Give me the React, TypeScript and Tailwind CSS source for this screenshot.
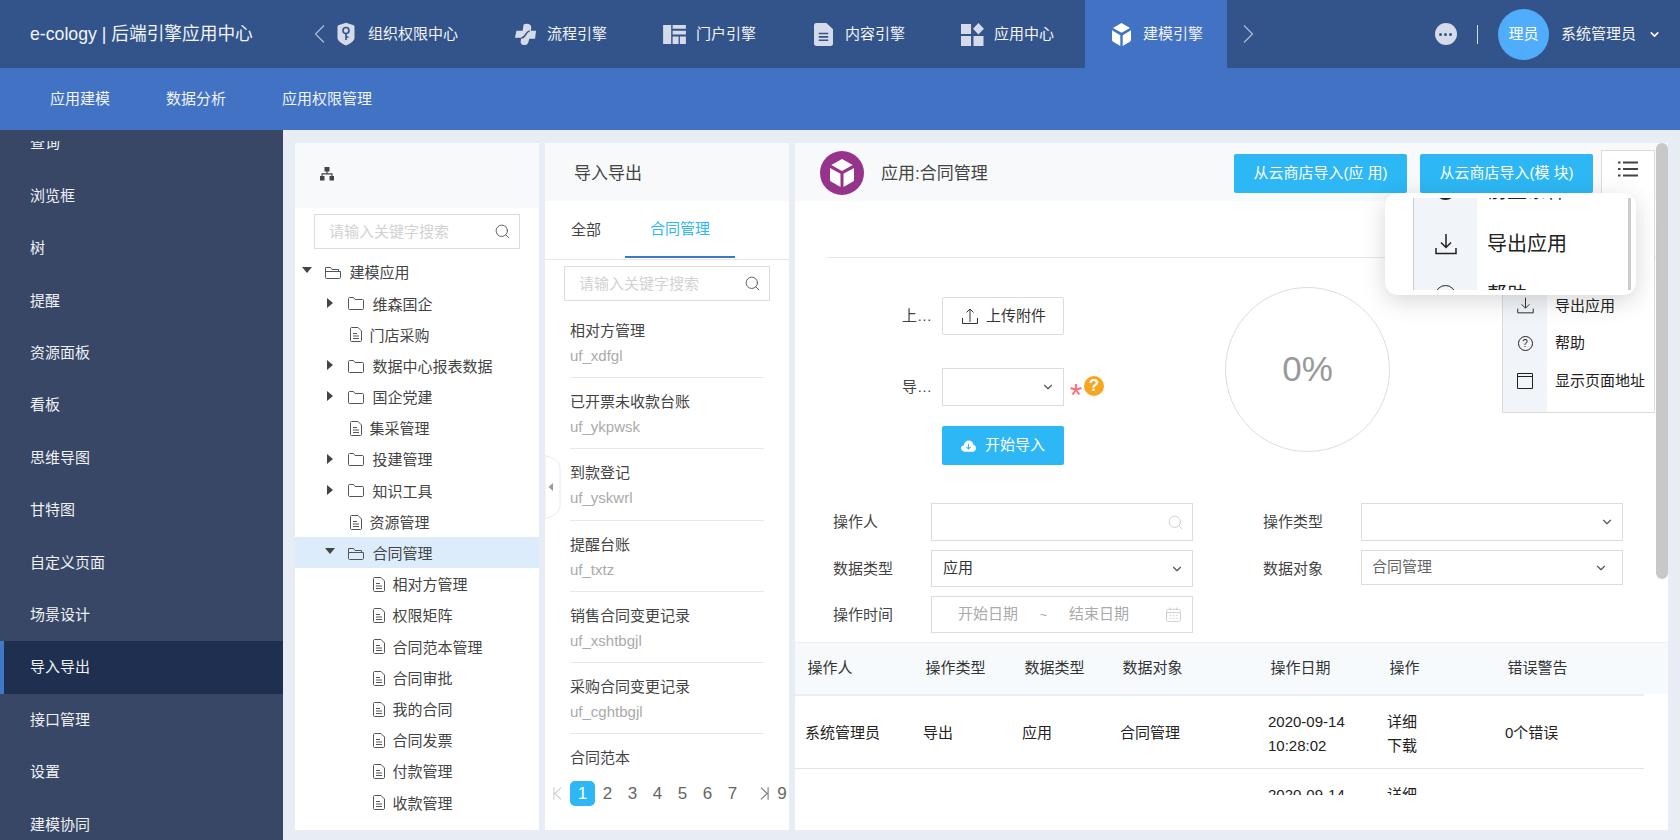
import React from 'react';
import { ChevronDown, Search } from 'lucide-react';

const SIDE_ITEMS = ['查询', '浏览框', '树', '提醒', '资源面板', '看板', '思维导图', '甘特图', '自定义页面', '场景设计', '导入导出', '接口管理', '设置', '建模协同'];

const LIST_ITEMS = [
  ['相对方管理', 'uf_xdfgl'],
  ['已开票未收款台账', 'uf_ykpwsk'],
  ['到款登记', 'uf_yskwrl'],
  ['提醒台账', 'uf_txtz'],
  ['销售合同变更记录', 'uf_xshtbgjl'],
  ['采购合同变更记录', 'uf_cghtbgjl'],
  ['合同范本', ''],
];

const TREE_ROWS = [
  { label: '建模应用', type: 'open', depth: 0 },
  { label: '维森国企', type: 'closed', depth: 1 },
  { label: '门店采购', type: 'doc', depth: 1 },
  { label: '数据中心报表数据', type: 'closed', depth: 1 },
  { label: '国企党建', type: 'closed', depth: 1 },
  { label: '集采管理', type: 'doc', depth: 1 },
  { label: '投建管理', type: 'closed', depth: 1 },
  { label: '知识工具', type: 'closed', depth: 1 },
  { label: '资源管理', type: 'doc', depth: 1 },
  { label: '合同管理', type: 'open', depth: 1, active: true },
  { label: '相对方管理', type: 'doc', depth: 2 },
  { label: '权限矩阵', type: 'doc', depth: 2 },
  { label: '合同范本管理', type: 'doc', depth: 2 },
  { label: '合同审批', type: 'doc', depth: 2 },
  { label: '我的合同', type: 'doc', depth: 2 },
  { label: '合同发票', type: 'doc', depth: 2 },
  { label: '付款管理', type: 'doc', depth: 2 },
  { label: '收款管理', type: 'doc', depth: 2 },
];

const TABLE_COLS = 'grid grid-cols-[118px_99px_98px_148px_119px_118px_1fr]';

const CubeIcon = ({ className }: { className: string }) => (
  <svg viewBox="2.5 1.5 19 21" preserveAspectRatio="none" className={className} fill="currentColor">
    <path d="M12 1.5 20.5 6 12 10.5 3.5 6Z" />
    <path d="M2.5 8.2 10.8 12.6V22.5L3.6 18.6C2.9 18.2 2.5 17.6 2.5 16.8Z" />
    <path d="M21.5 8.2 13.2 12.6V22.5L20.4 18.6C21.1 18.2 21.5 17.6 21.5 16.8Z" />
  </svg>
);

const ShieldIcon = () => (
  <svg viewBox="0 0 18 24" className="w-[18px] h-[24px]">
    <path d="M2 3 9 .8 16 3C17 3.3 17.5 3.8 17.5 5V16C17.5 19 12 22.5 9 23.5 6 22.5.5 19 .5 16V5C.5 3.8 1 3.3 2 3Z" fill="#d5dbe8" />
    <circle cx="9" cy="8.5" r="3" fill="none" stroke="#33548a" strokeWidth="1.6" />
    <path d="M9 11.5V18M9 15H11.5" fill="none" stroke="#33548a" strokeWidth="1.6" />
  </svg>
);

const FlowIcon = () => (
  <svg viewBox="0 0 24 24" className="w-[23px] h-[23px]">
    <path d="M10 1.5Q12 .5 15 1 18 1.5 18 5L17.5 8H23L22 16.5H16L15 20Q14 23 10.5 23 6.5 23 7 19L7.5 15.5H1L2.5 8H9Z" fill="#d5dbe8" />
    <path d="M16.5 8.5C12 8 12.5 16 7.5 15.5" fill="none" stroke="#33548a" strokeWidth="1.5" />
  </svg>
);

const PortalIcon = () => (
  <svg viewBox="0 0 24 20" className="w-[23px] h-[19px]" fill="#d5dbe8">
    <path d="M0 0H8.5V20H0ZM10 0H24V4H10ZM10 6H24V10H10ZM10 12H16.3V20H10ZM17.7 12H24V20H17.7Z" />
  </svg>
);

const DocFillIcon = () => (
  <svg viewBox="0 0 20 24" className="w-[19px] h-[23px]">
    <path d="M2.5 0H13L20 6.5V21.5C20 23 19 24 17.5 24H2.5C1 24 0 23 0 21.5V2.5C0 1 1 0 2.5 0Z" fill="#d5dbe8" />
    <path d="M5 11H15M5 14.5H15M5 18H15" stroke="#33548a" strokeWidth="1.6" />
  </svg>
);

const AppsIcon = () => (
  <svg viewBox="0 0 24 24" className="w-[23px] h-[23px]" fill="#d5dbe8">
    <path d="M0 1H10.5V11.5H0ZM0 13.5H10.5V24H0ZM13 13.5H23.5V24H13ZM18.2 0 24 6 18.2 12 12.5 6Z" />
  </svg>
);

const NavArrow = ({ points }: { points: string }) => (
  <svg viewBox="0 0 11 18" className="w-[11px] h-[18px]" fill="none" stroke="#aebcd4" strokeWidth="1.2">
    <path d={points} />
  </svg>
);

const Tab = ({ icon, label, active, first }: { icon: React.ReactNode; label: string; active?: boolean; first?: boolean }) => (
  <div className={`h-full flex items-center pr-[24px] ${first ? '' : 'pl-[24px]'} ${active ? 'bg-[#4172c4]' : ''}`}>
    <div className="w-[24px] flex justify-center">{icon}</div>
    <span className="ml-[10px] text-[15px] text-[#f2f4f8] whitespace-nowrap">{label}</span>
  </div>
);

const SearchBox = () => (
  <div className="ml-[19px] w-[206px] h-[35px] border border-[#dcdcdc] flex items-center pl-[14px] pr-[8px]">
    <input placeholder="请输入关键字搜索" className="flex-1 min-w-0 pt-[2px] text-[15px] outline-none placeholder:text-[#d2d2d2]" />
    <Search className="w-[17px] h-[17px] text-[#555]" strokeWidth={1.3} />
  </div>
);

const TreeRow = ({ label, type, depth, active }: { label: string; type: string; depth: number; active?: boolean }) => {
  const isDoc = type === 'doc';
  const padding = isDoc ? (depth === 1 ? 'pl-[55px]' : 'pl-[78px]') : depth === 0 ? 'pl-[7px]' : 'pl-[30px]';
  return (
    <div className={`h-[31.2px] flex items-center text-[15px] text-[#444] whitespace-nowrap ${padding} ${active ? 'bg-[#dcecfb]' : ''}`}>
      {type === 'open' && (
        <svg viewBox="0 0 10 6" className="w-[10px] h-[6px] mb-[3px]"><path d="M0 0H10L5 6Z" fill="#444" /></svg>
      )}
      {type === 'closed' && (
        <div className="w-[10px] flex justify-center">
          <svg viewBox="0 0 6 10" className="w-[6px] h-[10px]"><path d="M0 0 6 5 0 10Z" fill="#444" /></svg>
        </div>
      )}
      {type === 'open' && (
        <svg viewBox="0 0 16 13" className="ml-[13px] mt-[2px] w-[16px] h-[13px]" fill="none" stroke="#555" strokeWidth="1">
          <path d="M.5 11.5V1.5H5.5L7 3.5H13.5V5.5M.5 11.5V5.5H15.5V11C15.5 12 15 12.5 14 12.5H1.5C1 12.5.5 12 .5 11.5Z" />
        </svg>
      )}
      {type === 'closed' && (
        <svg viewBox="0 0 16 13" className="ml-[13px] mt-[2px] w-[16px] h-[13px]" fill="none" stroke="#555" strokeWidth="1">
          <path d="M.5 1.5C.5 1 1 .5 1.5 .5H5.5L7 2.5H14.5C15 2.5 15.5 3 15.5 3.5V11.5C15.5 12 15 12.5 14.5 12.5H1.5C1 12.5.5 12 .5 11.5Z" />
        </svg>
      )}
      {isDoc && (
        <svg viewBox="0 0 12 15" className="mt-[2px] w-[12px] h-[15px]" fill="none" stroke="#555" strokeWidth="1">
          <path d="M1.5.5H8L11.5 4V13.5C11.5 14 11 14.5 10.5 14.5H1.5C1 14.5.5 14 .5 13.5V1.5C.5 1 1 .5 1.5 .5ZM3 6.5H7M3 9H9M3 11.5H9" />
        </svg>
      )}
      <span className={`pt-[4px] ${isDoc ? 'ml-[7.5px]' : 'ml-[8.5px]'}`}>{label}</span>
    </div>
  );
};

const DownloadIcon = ({ className, stroke }: { className: string; stroke: number }) => (
  <svg viewBox="0 0 22 22" className={className} fill="none" stroke="#222" strokeWidth={stroke}>
    <path d="M11 1V14M6 9.5 11 14.5 16 9.5M1 15V20.5H21V15" />
  </svg>
);

const FilterField = ({ label, children, height = 'h-[37px]' }: { label: string; children?: React.ReactNode; height?: string }) => (
  <div className="flex items-start w-[360px]">
    <span className="w-[98px] h-[37px] leading-[37px] text-[15px] text-[#444]">{label}</span>
    <div className={`w-[262px] border border-[#dcdcdc] flex items-center ${height}`}>{children}</div>
  </div>
);

const Chevron = ({ className }: { className: string }) => <ChevronDown className={`w-[14px] h-[14px] text-[#555] ${className}`} strokeWidth={2} />;

const LogRow = () => (
  <div className={`${TABLE_COLS} pl-[10px] pt-[2px] h-[73px] border-b border-[#e4e4e4] items-center text-[15px] text-[#222]`}>
    <span>系统管理员</span>
    <span>导出</span>
    <span>应用</span>
    <span>合同管理</span>
    <span className="leading-[24px] pt-[2px]">2020-09-14<br />10:28:02</span>
    <span className="leading-[24px] pt-[2px]">详细<br />下载</span>
    <span>0个错误</span>
  </div>
);

const MENU_ROWS: [string, React.ReactNode][] = [
  ['导出应用', <DownloadIcon key="d" className="w-[17px] h-[17px]" stroke={1.2} />],
  ['帮助', <div key="h" className="w-[15px] h-[15px] rounded-full border border-[#222] text-[10px] leading-[13px] text-center">?</div>],
  ['显示页面地址', <svg key="b" viewBox="0 0 16 16" className="w-[16px] h-[16px]" fill="none" stroke="#222"><path d="M.5 .5H15.5V15.5H.5ZM.5 3.5H15.5" /></svg>],
];

export default function App() {
  return (
    <div className="w-[1680px] h-[840px] overflow-hidden flex flex-col bg-[#e8edf5] [font-family:'Liberation_Sans','Noto_Sans_CJK_SC',sans-serif]">
      {/* top bar */}
      <div className="h-[68px] shrink-0 bg-[#33548a] flex items-center">
        <div className="w-[310px] pl-[30px] text-[17.7px] text-[#f2f4f8] whitespace-nowrap">e-cology | 后端引擎应用中心</div>
        <div className="w-[24px] pl-[4px] flex">
          <NavArrow points="M10 .5 1.5 9 10 17.5" />
        </div>
        <div className="h-full flex gap-[7px]">
          <Tab first icon={<ShieldIcon />} label="组织权限中心" />
          <Tab icon={<FlowIcon />} label="流程引擎" />
          <Tab icon={<PortalIcon />} label="门户引擎" />
          <Tab icon={<DocFillIcon />} label="内容引擎" />
          <Tab icon={<AppsIcon />} label="应用中心" />
          <Tab active icon={<CubeIcon className="w-[19px] h-[23px] text-white" />} label="建模引擎" />
        </div>
        <div className="ml-[16px] flex">
          <NavArrow points="M1 .5 9.5 9 1 17.5" />
        </div>
        <div className="ml-auto flex items-center pr-[19px]">
          <div className="w-[22px] h-[22px] rounded-full bg-[#d5dbe8] flex items-center justify-center gap-[2px]">
            <span className="w-[3px] h-[3px] rounded-full bg-[#33548a]" />
            <span className="w-[3px] h-[3px] rounded-full bg-[#33548a]" />
            <span className="w-[3px] h-[3px] rounded-full bg-[#33548a]" />
          </div>
          <div className="ml-[20px] w-px h-[19px] bg-[#d5dbe8]" />
          <div className="ml-[20px] w-[51px] h-[51px] rounded-full bg-[#4fadfb] flex items-center justify-center text-[15px] text-white">理员</div>
          <span className="ml-[12px] text-[15px] text-[#f2f4f8] whitespace-nowrap">系统管理员</span>
          <ChevronDown className="ml-[12px] w-[13px] h-[13px] text-white" strokeWidth={3} />
        </div>
      </div>

      {/* sub nav */}
      <div className="h-[62px] shrink-0 bg-[#4172c4] flex items-center pl-[50px] gap-[56px] text-[15px] text-[#f2f4f8]">
        <span>应用建模</span>
        <span>数据分析</span>
        <span>应用权限管理</span>
      </div>

      <div className="flex-1 min-h-0 flex">
        {/* sidebar */}
        <div className="w-[283px] shrink-0 bg-[#384766] pt-[11px]">
          <div className="h-full overflow-hidden">
            <div className="-mt-[23.5px]">
              {SIDE_ITEMS.map((item) => (
                <div
                  key={item}
                  className={`h-[52.4px] flex items-center text-[15px] text-[#eef1f6] ${item === '导入导出' ? 'bg-[#1f2f50] border-l-4 border-[#3f78c8] pl-[26px]' : 'pl-[30px]'}`}
                >
                  {item}
                </div>
              ))}
            </div>
          </div>
        </div>

        <div className="flex-1 min-w-0 flex gap-[6px] pl-[12px] pr-[12px] pt-[13px] pb-[10px]">
          {/* tree panel */}
          <div className="w-[244px] shrink-0 bg-white overflow-hidden">
            <div className="h-[65px] bg-[#f8f9fa] flex items-center pl-[25px] pb-[3px]">
              <svg viewBox="0 0 14 14" className="w-[14px] h-[14px]" fill="#444">
                <path d="M4.5 0H9.5V4.5H7.6V6.2H12.5V9H14V13.5H9.5V9H11.4V7.4H2.6V9H4.5V13.5H0V9H1.5V6.2H6.4V4.5H4.5Z" />
              </svg>
            </div>
            <div className="mt-[6px]"><SearchBox /></div>
            <div className="mt-[7px]">
              {TREE_ROWS.map((row) => (
                <TreeRow key={row.label + row.depth} {...row} />
              ))}
            </div>
          </div>

          {/* list panel */}
          <div className="relative w-[244px] shrink-0 bg-white overflow-hidden">
            <div className="h-[58px] bg-[#f8f9fa] flex items-center pl-[29px] pt-[4px] text-[17px] text-[#444]">导入导出</div>
            <div className="h-[59px] border-b border-[#e8e8e8] flex text-[15px]">
              <div className="h-[57px] pl-[26px] pt-[2px] w-[80px] flex items-center text-[#444]">全部</div>
              <div className="h-[57px] w-[110px] pt-[2px] border-b-2 border-[#3f78c8] flex items-center justify-center text-[#2db7f5]">合同管理</div>
            </div>
            <div className="mt-[6px]"><SearchBox /></div>
            <div className="mt-[6px] mx-[25px] h-[468px] overflow-hidden">
              {LIST_ITEMS.map(([title, code]) => (
                <div key={title} className="h-[71.2px] pt-[11px] border-b border-[#e8e8e8] text-[15px]">
                  <div className="leading-[25px] text-[#444] whitespace-nowrap">{title}</div>
                  <div className="leading-[26px] text-[#aaa]">{code}</div>
                </div>
              ))}
            </div>
            <div className="mt-[6px] flex items-center h-[25px] text-[17px] text-[#666]">
              <div className="w-[25px] shrink-0 flex justify-center">
                <svg viewBox="0 0 10 14" className="w-[9px] h-[13px]" fill="none" stroke="#ccc" strokeWidth="1.2"><path d="M1 0V14M9 .5 2 7 9 13.5" /></svg>
              </div>
              <div className="w-[25px] h-[25px] shrink-0 rounded-[5px] bg-[#2db7f5] text-white flex items-center justify-center">1</div>
              {[2, 3, 4, 5, 6, 7].map((n) => (
                <div key={n} className="w-[25px] shrink-0 text-center">{n}</div>
              ))}
              <div className="w-[30px] shrink-0 pl-[8px] flex justify-center">
                <svg viewBox="0 0 10 14" className="w-[9px] h-[13px]" fill="none" stroke="#777" strokeWidth="1.2"><path d="M9 0V14M1 .5 8 7 1 13.5" /></svg>
              </div>
              <div className="w-[14px] shrink-0 text-center">9</div>
            </div>
            {/* collapse handle */}
            <svg viewBox="0 0 16 64" className="absolute left-0 top-[312px] w-[16px] h-[64px]">
              <path d="M0 .5C8 3 15 6 15 13V51C15 58 8 61 0 63.5Z" fill="#fff" stroke="#e6eaf1" />
              <path d="M8 28 3.5 32 8 36Z" fill="#999" />
            </svg>
          </div>

          {/* detail panel */}
          <div className="relative flex-1 min-w-0 bg-white overflow-hidden">
            <div className="h-[58px] bg-[#f8f9fa] flex items-center pl-[25px] pr-[13px] pt-[2px]">
              <div className="w-[44px] h-[44px] rounded-full bg-[#96348c] flex items-center justify-center">
                <CubeIcon className="w-[24px] h-[28px] text-white" />
              </div>
              <span className="ml-[17px] pt-[2px] text-[17px] text-[#444]">应用:合同管理</span>
              <button className="ml-auto w-[173px] h-[39px] rounded-[2px] bg-[#2db7f5] text-[15px] text-white">从云商店导入(应 用)</button>
              <button className="ml-[13px] w-[173px] h-[39px] rounded-[2px] bg-[#2db7f5] text-[15px] text-white">从云商店导入(模 块)</button>
              <div className="ml-[8px] self-end w-[54px] h-[51px] bg-white border-t border-l border-r border-[#dcdcdc] flex justify-center pt-[10px]">
                <svg viewBox="0 0 20 16" className="w-[20px] h-[16px]" stroke="#444" strokeWidth="2">
                  <path d="M0 1.5H2.5M0 8H2.5M0 14.5H2.5M5 1.5H20M5 8H20M5 14.5H20" />
                </svg>
              </div>
            </div>

            <div className="mt-[56px] ml-[31px] border-t border-[#e8e8e8]" />

            <div className="flex items-start">
              <div className="w-[430px] pl-[107px] pt-[39px] text-[15px]">
                <div className="flex items-center">
                  <span className="w-[40px] text-[#444]">上…</span>
                  <button className="w-[122px] h-[38px] border border-[#dcdcdc] rounded-[2px] flex items-center pl-[19px] text-[#333]">
                    <svg viewBox="0 0 16 16" className="w-[16px] h-[16px]" fill="none" stroke="#333" strokeWidth="1">
                      <path d="M8 14V1M4.5 4.5 8 1 11.5 4.5M.5 10V15.5H15.5V10" />
                    </svg>
                    <span className="ml-[8px]">上传附件</span>
                  </button>
                </div>
                <div className="mt-[33px] flex items-center">
                  <span className="w-[40px] text-[#444]">导…</span>
                  <div className="w-[122px] h-[38px] border border-[#dcdcdc] flex items-center justify-end pr-[8px]">
                    <Chevron className="" />
                  </div>
                  <span className="ml-[4px] w-[16px] text-center text-[32px] leading-none text-[#ff6b7a] translate-y-[8px]">*</span>
                  <div className="w-[20px] h-[20px] -mt-[3px] rounded-full bg-[#f8a522] flex items-center justify-center text-[17px] font-bold text-white">?</div>
                </div>
                <button className="mt-[20px] ml-[40px] w-[122px] h-[39px] rounded-[2px] bg-[#2db7f5] flex items-center pl-[19px] text-white">
                  <svg viewBox="0 0 16 12" className="w-[15px] h-[12px]">
                    <path d="M4 12C1.8 12 0 10.5 0 8.5 0 6.8 1.2 5.4 3 5.1 3.4 2.2 5.6 0 8.3 0 11 0 13 2 13.3 4.7 15 5.2 16 6.6 16 8.3 16 10.4 14.4 12 12.3 12Z" fill="#fff" />
                    <path d="M8 3.5V9M5.8 7 8 9.2 10.2 7" fill="none" stroke="#2db7f5" strokeWidth="1.1" />
                  </svg>
                  <span className="ml-[9px]">开始导入</span>
                </button>
              </div>
              <div className="mt-[29px] w-[165px] h-[165px] rounded-full border-[1.5px] border-[#ddd] flex items-center justify-center text-[35px] text-[#999]">0%</div>
            </div>

            <div className="mt-[38px] pl-[38px] flex flex-col gap-[9px]">
              <div className="flex gap-[70px]">
                <FilterField label="操作人" height="h-[38px]">
                  <Search className="ml-auto mr-[8px] w-[17px] h-[17px] text-[#c8c8c8]" strokeWidth={1.2} />
                </FilterField>
                <FilterField label="操作类型" height="h-[38px]">
                  <Chevron className="ml-auto mr-[8px]" />
                </FilterField>
              </div>
              <div className="flex gap-[70px]">
                <FilterField label="数据类型">
                  <span className="ml-[11px] text-[15px] text-[#333]">应用</span>
                  <Chevron className="ml-auto mr-[8px]" />
                </FilterField>
                <FilterField label="数据对象" height="h-[35px]">
                  <span className="ml-[10px] text-[15px] text-[#666]">合同管理</span>
                  <Chevron className="ml-auto mr-[14px]" />
                </FilterField>
              </div>
              <FilterField label="操作时间">
                <span className="ml-[26px] text-[15px] text-[#aaa]">开始日期</span>
                <span className="ml-[22px] text-[12px] text-[#aaa]">~</span>
                <span className="ml-[22px] text-[15px] text-[#aaa]">结束日期</span>
                <svg viewBox="0 0 16 16" className="ml-auto mr-[11px] w-[15px] h-[15px]" fill="none" stroke="#ccc" strokeWidth="1">
                  <path d="M2.5 2.5H13.5C14.5 2.5 15.5 3.5 15.5 4.5V13.5C15.5 14.5 14.5 15.5 13.5 15.5H2.5C1.5 15.5.5 14.5.5 13.5V4.5C.5 3.5 1.5 2.5 2.5 2.5ZM.5 6H15.5M4.5 .5V3M11.5 .5V3M4 9H5.5M7.2 9H8.8M10.5 9H12M4 12H5.5M7.2 12H8.8M10.5 12H12" />
                </svg>
              </FilterField>
            </div>

            {/* log table */}
            <div className={`mt-[9px] h-[52px] bg-[#f7fafd] border-t border-[#eeeeee] ${TABLE_COLS} pl-[12.5px] items-center text-[15px] text-[#333]`}>
              <span>操作人</span>
              <span>操作类型</span>
              <span>数据类型</span>
              <span>数据对象</span>
              <span>操作日期</span>
              <span>操作</span>
              <span>错误警告</span>
            </div>
            <div className="w-[849px] h-[101px] border-t-2 border-[#e8eef5] overflow-hidden">
              <LogRow />
              <LogRow />
            </div>

            {/* scrollbar */}
            <div className="absolute right-0 top-0 w-[12px] h-[436px] rounded-[6px] bg-[#c8c8c8]" />

            {/* dropdown menu */}
            <div className="absolute left-[707px] top-[58px] w-[153px] h-[212px] bg-white border-l border-r border-b border-[#dcdcdc] flex text-[15px] text-[#222]">
              <div className="w-[44px] bg-[#f1f4f8] pt-[86px]">
                {MENU_ROWS.map(([label, icon]) => (
                  <div key={label} className="h-[37.5px] flex items-center justify-center">{icon}</div>
                ))}
              </div>
              <div className="pl-[8px] pt-[86px] whitespace-nowrap">
                {MENU_ROWS.map(([label]) => (
                  <div key={label} className="h-[37.5px] flex items-center">{label}</div>
                ))}
              </div>
            </div>

            {/* magnifier popover */}
            <div className="absolute left-[590px] top-[50px] w-[251px] h-[102px] rounded-[13px] bg-white shadow-[0_6px_24px_rgba(0,0,0,0.16)] pl-[28px] pr-[5px] py-[5px]">
              <div className="h-[92px] overflow-hidden border-l border-r-[3px] border-l-[#ccc] border-r-[#ccc] relative text-[20px] text-[#222]">
                <div className="absolute left-0 top-0 bottom-0 w-[63px] bg-[#f1f4f8]" />
                <div className="relative -mt-[30.5px]">
                  <div className="h-[51px] flex items-center whitespace-nowrap">
                    <div className="w-[63px] flex justify-center">
                      <div className="w-[21px] h-[21px] mb-[8px] rounded-full border-[3px] border-[#222]" />
                    </div>
                    <span className="ml-[10px] mb-[4px]">前置条件</span>
                  </div>
                  <div className="h-[51px] flex items-center whitespace-nowrap">
                    <div className="w-[63px] flex justify-center">
                      <DownloadIcon className="w-[22px] h-[22px]" stroke={1.5} />
                    </div>
                    <span className="ml-[10px]">导出应用</span>
                  </div>
                  <div className="h-[51px] flex items-center whitespace-nowrap">
                    <div className="w-[63px] flex justify-center">
                      <div className="w-[21px] h-[21px] rounded-full border border-[#222]" />
                    </div>
                    <span className="ml-[10px]">帮助</span>
                  </div>
                </div>
              </div>
            </div>
          </div>
        </div>
      </div>
    </div>
  );
}
